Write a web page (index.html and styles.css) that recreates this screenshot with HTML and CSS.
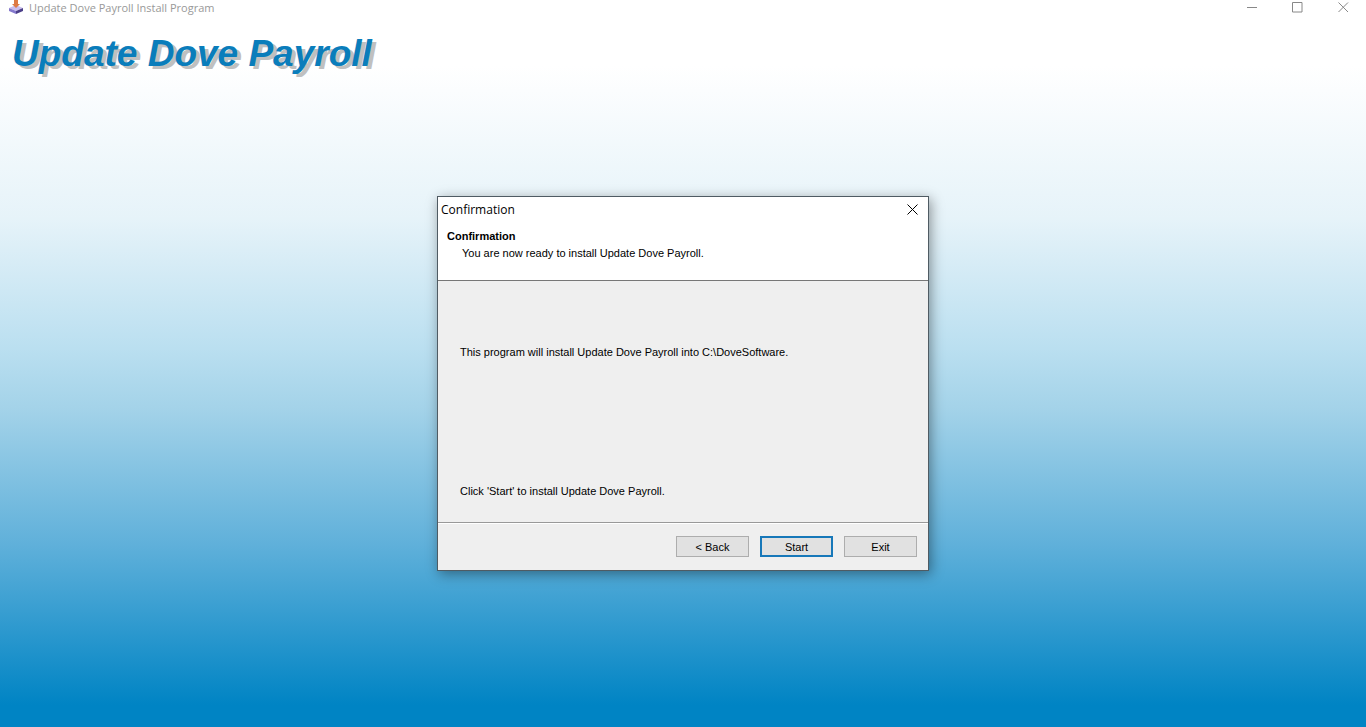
FILE: index.html
```html
<!DOCTYPE html>
<html lang="en">
<head>
    <meta charset="UTF-8">
    <meta name="viewport" content="width=device-width, initial-scale=1.0">
    <title>Update Dove Payroll Install Program</title>
    <link rel="stylesheet" href="styles.css">
</head>
<body>
    <header class="titlebar">
        <svg class="app-icon" width="16" height="16" viewBox="0 0 16 16">
            <path d="M1 8 L8 5 L15 8 L8 11 Z" fill="#c9bdee"/>
            <path d="M1 8 L8 11 V14 L1 11 Z" fill="#8478cc"/>
            <path d="M15 8 L8 11 V14 L15 11 Z" fill="#4b3f88"/>
            <path d="M6 0 H10 V4 H12 L8 8 L4 4 H6 Z" fill="#dd7a45"/>
        </svg>
        <span class="titlebar-text">Update Dove Payroll Install Program</span>
        <div class="window-controls">
            <button type="button" aria-label="Minimize">
                <svg width="11" height="11" viewBox="0 0 11 11"><path d="M1 5.5H11"/></svg>
            </button>
            <button type="button" aria-label="Maximize">
                <svg width="11" height="11" viewBox="0 0 11 11"><path d="M.5 .5H10V10H.5Z"/></svg>
            </button>
            <button type="button" aria-label="Close">
                <svg width="11" height="11" viewBox="0 0 11 11"><path d="M.5 .5L10 10M10 .5L.5 10"/></svg>
            </button>
        </div>
    </header>

    <main class="installer">
        <h1>Update Dove Payroll</h1>

        <section class="dialog" role="dialog" aria-labelledby="dialogTitle">
            <div class="dialog-title">
                <span id="dialogTitle">Confirmation</span>
                <button type="button" class="dialog-close" aria-label="Close">
                    <svg width="11" height="11" viewBox="0 0 11 11"><path d="M.5 .5L10.5 10.5M10.5 .5L.5 10.5"/></svg>
                </button>
            </div>
            <div class="dialog-header">
                <h2>Confirmation</h2>
                <p>You are now ready to install Update Dove Payroll.</p>
            </div>
            <div class="dialog-body">
                <p>This program will install Update Dove Payroll into C:\DoveSoftware.</p>
                <p>Click 'Start' to install Update Dove Payroll.</p>
            </div>
            <div class="dialog-footer">
                <button type="button" class="btn">&lt; Back</button>
                <button type="button" class="btn btn-default">Start</button>
                <button type="button" class="btn">Exit</button>
            </div>
        </section>
    </main>
</body>
</html>
```
FILE: styles.css
```css
* {
    box-sizing: border-box;
}
body {
    margin: 0;
    min-height: 100vh;
    display: flex;
    flex-direction: column;
    font-family: "Liberation Sans", Arial, sans-serif;
    font-size: 11px;
    color: #000;
    background: linear-gradient(#fff 9%, #e6f3f9 30%, #badff0 48%, #a4d3e9 56%, #5fb0da 75%, #0084c4 97%);
}
h1, h2, p {
    margin: 0;
}
button {
    font-family: inherit;
    font-size: inherit;
    color: inherit;
    padding: 0;
}

/* main window */
.titlebar {
    display: flex;
    align-items: flex-start;
    height: 20px;
    padding-left: 8px;
    background: #fff;
    color: #999;
    font-family: "Open Sans", "Noto Sans", sans-serif;
    font-size: 11px;
    line-height: 16px;
}
.app-icon {
    margin-right: 5px;
}
.window-controls {
    display: flex;
    margin-left: auto;
}
.window-controls button {
    display: flex;
    justify-content: center;
    align-items: center;
    width: 46px;
    height: 15px;
    border: none;
    background: none;
}
svg {
    display: block;
}
.window-controls path {
    fill: none;
    stroke: #888;
}
.installer {
    flex: 1;
    display: flex;
    flex-direction: column;
    align-items: center;
}
h1 {
    align-self: flex-start;
    padding: 12px 0 0 12px;
    font-size: 37px;
    line-height: 44px;
    font-style: italic;
    color: #0a7dbb;
    text-shadow: 4px 3px 0 #c0c0c0;
}

/* dialog */
.dialog {
    width: 36%;
    min-width: 492px;
    margin: 120px 0 40px;
    border: 1px solid #4f5b63;
    background: #efefef;
    box-shadow: 2px 3px 12px rgba(0, 0, 0, 0.4);
}
.dialog-title {
    display: flex;
    justify-content: space-between;
    align-items: center;
    height: 24px;
    padding: 0 10px 0 3px;
    background: #fff;
    font-family: "Open Sans", "Noto Sans", sans-serif;
    font-size: 12px;
}
.dialog-close {
    border: none;
    background: none;
}
.dialog-close path {
    stroke: #000;
}
.dialog-header {
    height: 60px;
    padding: 7px 9px;
    background: #fff;
    border-bottom: 1px solid #777;
}
.dialog-header h2 {
    font-size: 11px;
    line-height: 16px;
}
.dialog-header p {
    padding: 1px 0 0 15px;
    line-height: 16px;
}
.dialog-body {
    display: flex;
    flex-direction: column;
    justify-content: space-between;
    height: 242px;
    padding: 63px 22px 23px;
    border-bottom: 1px solid #999;
    line-height: 16px;
}
.dialog-footer {
    display: flex;
    justify-content: flex-end;
    gap: 11px;
    padding: 12px 11px 13px;
    border-top: 1px solid #fff;
}
.btn {
    width: 73px;
    height: 21px;
    border: 1px solid #adadad;
    background: #e1e1e1;
    line-height: 16px;
}
.btn-default {
    border: 2px solid #1778b9;
}
```
